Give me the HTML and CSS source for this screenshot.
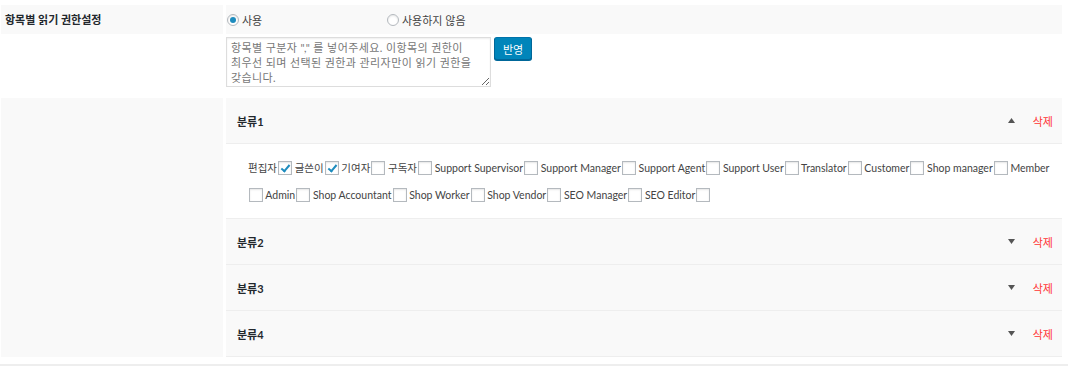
FILE: index.html
```html
<!DOCTYPE html>
<html lang="ko">
<head>
    <meta charset="UTF-8">
    <meta name="viewport" content="width=device-width, initial-scale=1.0">
    <title>항목별 읽기 권한설정</title>
    <link rel="stylesheet" href="styles.css">
</head>
<body>

<div class="settings">
    <!-- Use / don't use -->
    <div class="row row-shaded">
        <div class="row-label">항목별 읽기 권한설정</div>
        <div class="row-field">
            <label class="radio-option"><input type="radio" name="read-perm" checked>사용</label>
            <label class="radio-option"><input type="radio" name="read-perm">사용하지 않음</label>
        </div>
    </div>

    <!-- Group names -->
    <div class="row">
        <div class="row-label"></div>
        <div class="row-field group-input">
            <textarea class="group-names">항목별 구분자 "," 를 넣어주세요. 이항목의 권한이 최우선 되며 선택된 권한과 관리자만이 읽기 권한을 갖습니다.</textarea>
            <button class="button-primary">반영</button>
        </div>
    </div>

    <!-- Groups -->
    <div class="row">
        <div class="row-label shaded"></div>
        <div class="accordion">
            <div class="acc-item open">
                <div class="acc-head">
                    <span class="acc-title">분류1</span>
                    <svg class="acc-arrow" width="7" height="5" viewBox="0 0 7 5"><polygon points="3.5,0 7,5 0,5"/></svg>
                    <a class="acc-delete">삭제</a>
                </div>
                <div class="acc-body">편집자<input type="checkbox" checked> 글쓴이<input type="checkbox" checked> 기여자<input type="checkbox"> 구독자<input type="checkbox"> Support Supervisor<input type="checkbox"> Support Manager<input type="checkbox"> Support Agent<input type="checkbox"> Support User<input type="checkbox"> Translator<input type="checkbox"> Customer<input type="checkbox"> Shop manager<input type="checkbox"> Member<input type="checkbox"> Admin<input type="checkbox"> Shop Accountant<input type="checkbox"> Shop Worker<input type="checkbox"> Shop Vendor<input type="checkbox"> SEO Manager<input type="checkbox"> SEO Editor<input type="checkbox"></div>
            </div>
            <div class="acc-item">
                <div class="acc-head">
                    <span class="acc-title">분류2</span>
                    <svg class="acc-arrow" width="7" height="5" viewBox="0 0 7 5"><polygon points="0,0 7,0 3.5,5"/></svg>
                    <a class="acc-delete">삭제</a>
                </div>
            </div>
            <div class="acc-item">
                <div class="acc-head">
                    <span class="acc-title">분류3</span>
                    <svg class="acc-arrow" width="7" height="5" viewBox="0 0 7 5"><polygon points="0,0 7,0 3.5,5"/></svg>
                    <a class="acc-delete">삭제</a>
                </div>
            </div>
            <div class="acc-item">
                <div class="acc-head">
                    <span class="acc-title">분류4</span>
                    <svg class="acc-arrow" width="7" height="5" viewBox="0 0 7 5"><polygon points="0,0 7,0 3.5,5"/></svg>
                    <a class="acc-delete">삭제</a>
                </div>
            </div>
        </div>
    </div>
</div>

<div class="next-section"></div>

</body>
</html>
```

FILE: styles.css
```css
body {
    margin: 0;
    padding: 5px 0 0 0;
    background-color: #fff;
    color: #444;
    font-family: Lato, "Noto Sans CJK KR", sans-serif;
    font-size: 11px;
}

.settings {
    width: 1062px;
    display: flex;
    flex-direction: column;
    gap: 1px;
}

.row {
    display: grid;
    grid-template-columns: 222px 1fr;
    column-gap: 3px;
    margin-left: 1px;
}

.row-shaded .row-label,
.row-shaded .row-field,
.row-label.shaded {
    background-color: #f9f9f9;
}

.row-label {
    padding: 0 4px;
    font-weight: bold;
    color: #23282d;
    line-height: 29px;
}

.row-field {
    display: flex;
    align-items: center;
    height: 29px;
}

/* Radio buttons */
.radio-option {
    width: 160px;
    display: flex;
    align-items: center;
    color: #444;
}

input[type="radio"] {
    appearance: none;
    width: 12px;
    height: 12px;
    margin: 0 3px 0 1px;
    border: 1px solid #b4b9be;
    border-radius: 50%;
    background: #fff;
    box-shadow: inset 0 1px 2px rgba(0, 0, 0, 0.1);
    display: grid;
    place-content: center;
}

input[type="radio"]:checked::before {
    content: "";
    width: 6px;
    height: 6px;
    border-radius: 50%;
    background-color: #1e8cbe;
}

/* Textarea + button */
.group-input {
    height: auto;
    align-items: flex-start;
    padding: 2px 0 10px 0;
    gap: 3px;
}

.group-names {
    width: 265px;
    height: 50px;
    box-sizing: border-box;
    margin: 0;
    padding: 2px 3px 2px 4px;
    border: 1px solid #ddd;
    box-shadow: inset 0 1px 2px rgba(0, 0, 0, 0.07);
    font-family: inherit;
    font-size: 11px;
    line-height: 15px;
    letter-spacing: 0.4px;
    word-break: keep-all;
    color: #777;
    overflow: hidden;
}

.button-primary {
    height: 23px;
    padding: 0 8px;
    background-color: #0085ba;
    border: 1px solid #0073aa;
    border-color: #0073aa #006799 #006799;
    box-shadow: 0 1px 0 #006799;
    border-radius: 3px;
    color: #fff;
    font-family: inherit;
    font-size: 11px;
    cursor: pointer;
}

/* Accordion */
.accordion {
    display: flex;
    flex-direction: column;
}

.acc-item {
    border-bottom: 1px solid #eee;
}

.acc-head {
    height: 45px;
    display: flex;
    align-items: center;
    padding: 0 9px 0 11px;
    background-color: #f9f9f9;
}

.acc-title {
    flex: 1;
    font-weight: bold;
    color: #23282d;
}

.acc-arrow {
    fill: #555;
    margin-right: 18px;
}

.acc-delete {
    color: #f33;
    cursor: pointer;
}

.acc-item.open .acc-head {
    border-bottom: 1px solid #eee;
}

.acc-body {
    background-color: #fff;
    padding: 11px 12px 9px 22px;
    font-size: 10.5px;
    line-height: 27px;
    color: #444;
}

input[type="checkbox"] {
    appearance: none;
    width: 14px;
    height: 14px;
    margin: 0 0 0 1px;
    vertical-align: middle;
    position: relative;
    top: -1px;
    border: 1px solid #b4b9be;
    background: #fff;
    box-shadow: inset 0 1px 2px rgba(0, 0, 0, 0.1);
}

input[type="checkbox"]:checked::before {
    content: "";
    position: absolute;
    left: 4px;
    top: 1px;
    width: 3px;
    height: 7px;
    border: solid #1e8cbe;
    border-width: 0 2px 2px 0;
    transform: rotate(40deg);
}

.next-section {
    margin-top: 7px;
    height: 10px;
    background-color: #eee;
}
```
